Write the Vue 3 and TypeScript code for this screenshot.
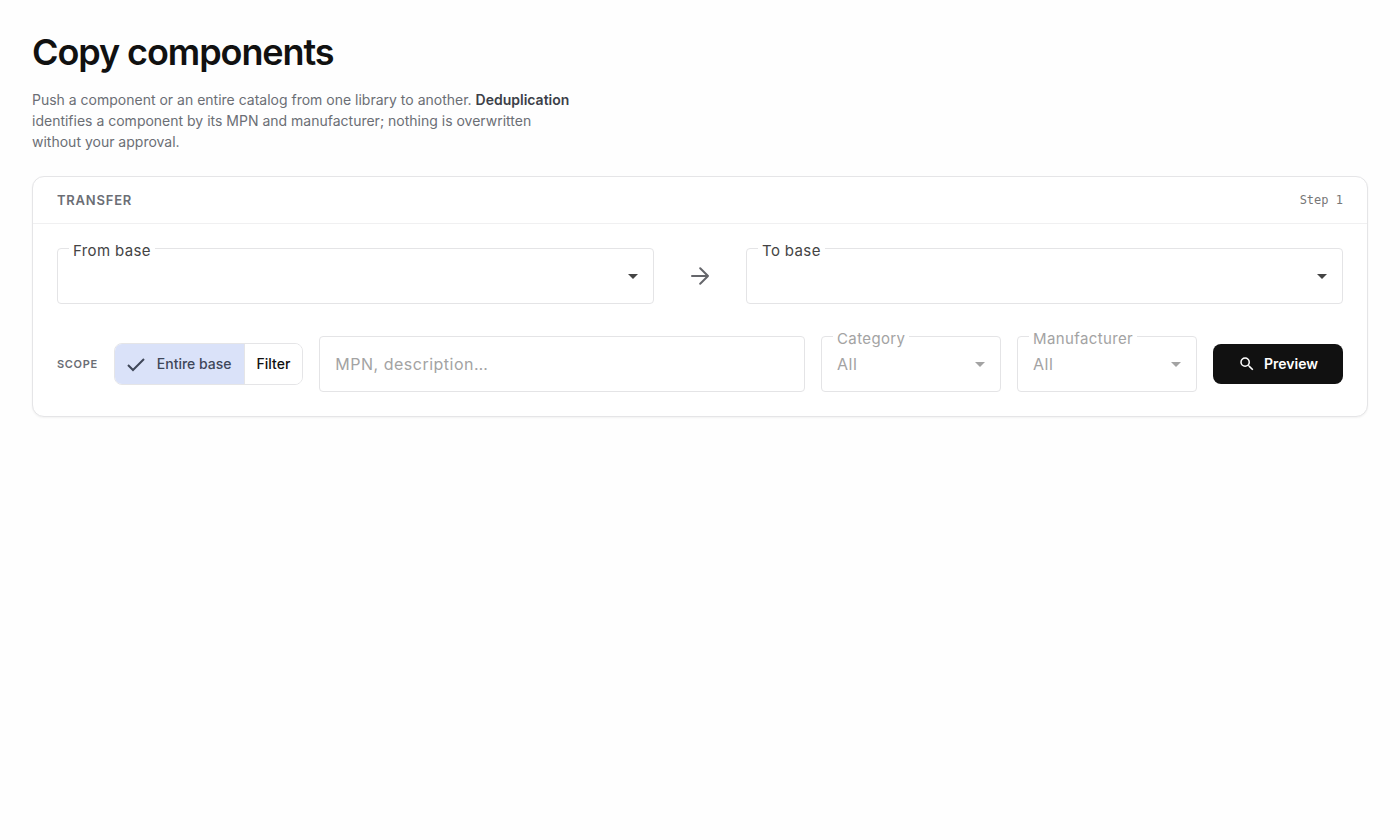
<script setup lang="ts">
import { ref } from 'vue'

type Scope = 'all' | 'filter'

const scope = ref<Scope>('all')
const source = ref('')
const target = ref('')
const query = ref('')
const category = ref('all')
const manufacturer = ref('all')
</script>

<template>
  <main class="page">
    <h1>Copy components</h1>
    <p class="intro">
      Push a component or an entire catalog from one library to another.
      <strong>Deduplication</strong> identifies a component by its MPN and
      manufacturer; nothing is overwritten without your approval.
    </p>

    <section class="card" aria-labelledby="transfer-title">
      <header class="card-head">
        <h2 id="transfer-title">TRANSFER</h2>
        <span class="step">Step 1</span>
      </header>

      <div class="card-body">
        <div class="bases">
          <div class="field">
            <label for="from-base">From base</label>
            <select id="from-base" v-model="source"></select>
            <svg class="caret" viewBox="0 0 10 5" aria-hidden="true"><path d="M0 0h10L5 5z" /></svg>
          </div>
          <svg class="arrow" viewBox="0 0 18 18" aria-hidden="true">
            <path d="M1 9h16M9.2 1.2 17 9l-7.8 7.8" />
          </svg>
          <div class="field">
            <label for="to-base">To base</label>
            <select id="to-base" v-model="target"></select>
            <svg class="caret" viewBox="0 0 10 5" aria-hidden="true"><path d="M0 0h10L5 5z" /></svg>
          </div>
        </div>

        <div class="filters">
          <span id="scope-label" class="scope">SCOPE</span>
          <div class="toggle" role="group" aria-labelledby="scope-label">
            <button type="button" :class="{ on: scope === 'all' }" :aria-pressed="scope === 'all'" @click="scope = 'all'">
              <svg v-if="scope === 'all'" class="check" viewBox="0 0 18 18" aria-hidden="true">
                <path d="m1 10 5 5L17 4" />
              </svg>
              Entire base
            </button>
            <button type="button" :class="{ on: scope === 'filter' }" :aria-pressed="scope === 'filter'" @click="scope = 'filter'">
              <svg v-if="scope === 'filter'" class="check" viewBox="0 0 18 18" aria-hidden="true">
                <path d="m1 10 5 5L17 4" />
              </svg>
              Filter
            </button>
          </div>
          <div class="field search">
            <input v-model="query" type="text" aria-label="MPN, description" placeholder="MPN, description…" :disabled="scope === 'all'" />
          </div>
          <div class="field narrow" :class="{ off: scope === 'all' }">
            <label for="category">Category</label>
            <select id="category" v-model="category" :disabled="scope === 'all'">
              <option value="all">All</option>
            </select>
            <svg class="caret" viewBox="0 0 10 5" aria-hidden="true"><path d="M0 0h10L5 5z" /></svg>
          </div>
          <div class="field narrow" :class="{ off: scope === 'all' }">
            <label for="manufacturer">Manufacturer</label>
            <select id="manufacturer" v-model="manufacturer" :disabled="scope === 'all'">
              <option value="all">All</option>
            </select>
            <svg class="caret" viewBox="0 0 10 5" aria-hidden="true"><path d="M0 0h10L5 5z" /></svg>
          </div>
          <button type="button" class="preview">
            <svg viewBox="0 0 24 24" aria-hidden="true">
              <path d="M15.5 14h-.79l-.28-.27A6.47 6.47 0 0 0 16 9.5 6.5 6.5 0 1 0 9.5 16c1.61 0 3.09-.59 4.23-1.57l.27.28v.79l5 4.99L20.49 19zm-6 0C7.01 14 5 11.99 5 9.5S7.01 5 9.5 5 14 7.01 14 9.5 11.99 14 9.5 14z" />
            </svg>
            Preview
          </button>
        </div>
      </div>
    </section>
  </main>
</template>

<style>
body {
  background: #fefefe;
}
</style>

<style scoped>
.page {
  padding: 32px;
  color: #111;
  font-family: Inter, "Liberation Sans", sans-serif;
  font-size: 14px;
}
.page * {
  box-sizing: border-box;
}
h1 {
  margin: 0 0 17px;
  font-size: 36px;
  font-weight: 600;
  line-height: 40px;
  letter-spacing: -0.03em;
}
.intro {
  max-width: 540px;
  margin: 0 0 24px;
  color: #6b6e75;
  line-height: 21px;
}
.intro strong {
  color: #3c3f48;
  font-weight: 600;
}
.card {
  border: 1px solid #e5e5e7;
  border-radius: 12px;
  background: #fff;
  box-shadow: 0 1px 2px rgba(0, 0, 0, 0.05);
}
.card-head {
  display: flex;
  align-items: center;
  justify-content: space-between;
  height: 47px;
  padding: 0 24px;
  border-bottom: 1px solid #f0f0f1;
}
h2 {
  margin: 0;
  color: #6b6e75;
  font-size: 13px;
  font-weight: 600;
  letter-spacing: 0.06em;
}
.step {
  color: #777;
  font-family: "DejaVu Sans Mono", "Liberation Mono", monospace;
  font-size: 12px;
}
.card-body {
  display: flex;
  flex-direction: column;
  gap: 32px;
  padding: 24px;
}
.bases {
  display: flex;
  align-items: center;
  gap: 37px;
}
.bases .field {
  flex: 1;
}
.arrow {
  width: 18px;
  height: 18px;
  fill: none;
  stroke: #65666b;
  stroke-width: 2;
  stroke-linecap: round;
  stroke-linejoin: round;
}
.filters {
  display: flex;
  align-items: center;
  gap: 16px;
}
.scope {
  color: #6b6e75;
  font-size: 11px;
  font-weight: 600;
  letter-spacing: 0.06em;
}
.field {
  position: relative;
  min-width: 0;
  color: #444;
}
.field.off {
  color: #a3a3a3;
}
.field label {
  position: absolute;
  top: -7px;
  left: 12px;
  padding: 0 4px;
  background: #fff;
  font-size: 15px;
  line-height: 20px;
  letter-spacing: 0.025em;
}
.field select,
.field input {
  display: block;
  width: 100%;
  height: 56px;
  padding: 0 15px;
  border: 1px solid #e4e4e6;
  border-radius: 4px;
  outline: none;
  appearance: none;
  background: #fff;
  color: inherit;
  font: inherit;
  font-size: 16px;
  letter-spacing: 0.5px;
  opacity: 1;
}
.field select:focus-visible,
.field input:focus-visible {
  border-color: #111;
}
.field input::placeholder {
  color: #a3a3a3;
  opacity: 1;
}
.caret {
  position: absolute;
  top: 26px;
  right: 16px;
  width: 10px;
  height: 5px;
  fill: currentColor;
  pointer-events: none;
}
.search {
  flex: 1;
}
.narrow {
  width: 180px;
}
.toggle {
  display: flex;
  overflow: hidden;
  border: 1px solid #e5e5e7;
  border-radius: 8px;
}
.toggle button {
  display: flex;
  align-items: center;
  gap: 12px;
  height: 40px;
  padding: 0 12px;
  border: 0;
  background: #fff;
  color: #111;
  font: inherit;
  font-weight: 500;
  line-height: 20px;
}
.toggle button + button {
  border-left: 1px solid #e5e5e7;
}
.toggle button.on {
  background: #dae2f9;
  color: #3f4759;
}
.check {
  width: 18px;
  height: 18px;
  fill: none;
  stroke: currentColor;
  stroke-width: 2;
}
.preview {
  display: flex;
  align-items: center;
  justify-content: center;
  gap: 8px;
  width: 130px;
  height: 40px;
  padding: 0;
  border: 0;
  border-radius: 8px;
  background: #111;
  color: #fff;
  font: inherit;
  font-weight: 600;
  line-height: 20px;
}
.preview svg {
  width: 18px;
  height: 18px;
  fill: currentColor;
}
</style>
